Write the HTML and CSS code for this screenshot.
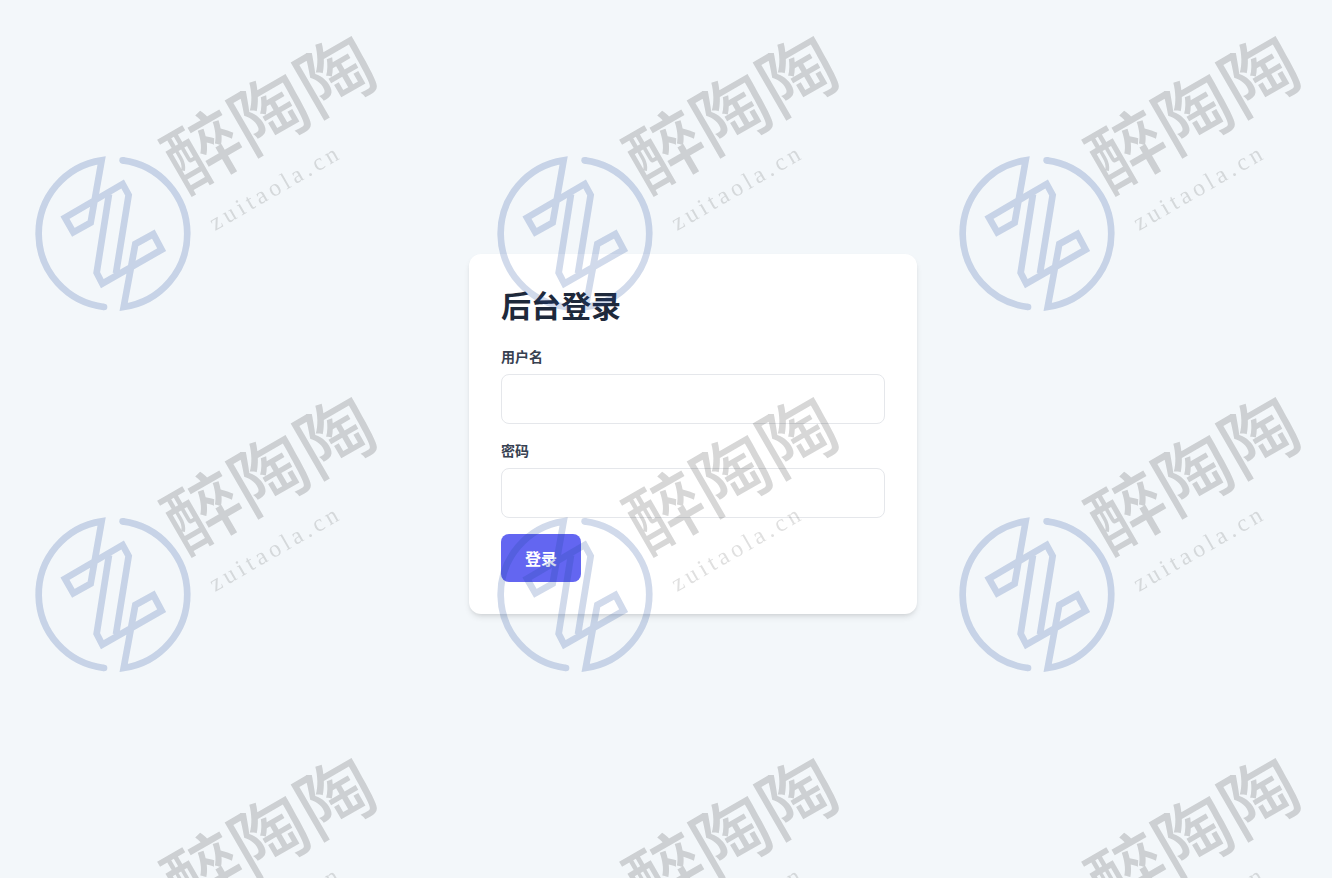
FILE: index.html
```html
<!DOCTYPE html>
<html lang="zh-CN">
<head>
    <meta charset="UTF-8">
    <meta name="viewport" content="width=device-width, initial-scale=1.0">
    <title>后台登录</title>
    <link rel="stylesheet" href="styles.css">
</head>
<body>
    <main class="page">
        <form class="login-card" action="#" method="post">
            <h1>后台登录</h1>
            <div class="input-group">
                <label for="username">用户名</label>
                <input type="text" id="username" name="username" required>
            </div>
            <div class="input-group">
                <label for="password">密码</label>
                <input type="password" id="password" name="password" required>
            </div>
            <button type="submit" class="login-btn">登录</button>
        </form>
    </main>

    <!-- Watermark, filled with tiles by the script below -->
    <div class="watermark" aria-hidden="true"></div>

    <template id="watermark-tile">
        <svg class="tile" viewBox="0 0 462 361">
            <g class="tile-logo" transform="translate(20 140) scale(0.3333)">
                <path d="M308 61A222 222 0 0 1 311 501L346 312L400 282L425 329L247 431L230 398L267 163"/>
                <path d="M252 501A222 222 0 0 1 245 61L212 248L160 277L135 233L308 132L326 165L288 400"/>
                <circle cx="308" cy="61" r="10"/>
                <circle cx="252" cy="501" r="10"/>
            </g>
            <text class="tile-name" transform="translate(185 194) rotate(-30)">醉陶陶</text>
            <text class="tile-site" transform="translate(215 231) rotate(-30)">zuitaola.cn</text>
        </svg>
    </template>

    <script>
        const watermark = document.querySelector('.watermark');
        const tile = document.getElementById('watermark-tile');

        function fillWatermark() {
            const cols = Math.ceil(window.innerWidth / 462);
            const rows = Math.ceil(window.innerHeight / 361);
            watermark.style.setProperty('--cols', cols);
            watermark.replaceChildren();
            for (let i = 0; i < cols * rows; i++) {
                watermark.appendChild(tile.content.cloneNode(true));
            }
        }

        fillWatermark();
        window.addEventListener('resize', fillWatermark);
    </script>
</body>
</html>
```
FILE: styles.css
```css
* {
    margin: 0;
    padding: 0;
    box-sizing: border-box;
}

body {
    font-family: "Noto Sans CJK SC", sans-serif;
    background-color: #f3f7fa;
    color: #1e293b;
}

.page {
    min-height: 100vh;
    padding: 0 0 10px 54px;
    display: flex;
    justify-content: center;
    align-items: center;
}

.login-card {
    width: 100%;
    max-width: 448px;
    padding: 32px;
    background: white;
    border-radius: 12px;
    box-shadow: 0 4px 6px -1px rgba(0,0,0,0.1), 0 2px 4px -2px rgba(0,0,0,0.1);
}

.login-card h1 {
    font-size: 30px;
    line-height: 36px;
    font-weight: bold;
    margin-bottom: 24px;
}

.input-group {
    margin-bottom: 16px;
}

.input-group label {
    display: block;
    font-size: 14px;
    line-height: 20px;
    font-weight: bold;
    color: #374151;
    margin-bottom: 8px;
}

.input-group input {
    display: block;
    width: 100%;
    height: 50px;
    padding: 12px 16px;
    border: 1px solid #e5e7eb;
    border-radius: 8px;
    font-family: inherit;
    font-size: 16px;
    background: white;
}

.input-group input:focus {
    outline: none;
    border-color: #6366f1;
}

.login-btn {
    display: block;
    padding: 12px 24px;
    background-color: #6366f1;
    color: white;
    border: none;
    border-radius: 8px;
    font-family: inherit;
    font-size: 16px;
    line-height: 24px;
    font-weight: bold;
    cursor: pointer;
}

.login-btn:hover {
    background-color: #4f46e5;
}

.watermark {
    position: fixed;
    inset: 0;
    overflow: hidden;
    pointer-events: none;
    display: grid;
    grid-template-columns: repeat(var(--cols), 462px);
    grid-auto-rows: 361px;
    align-content: start;
}

.tile {
    width: 462px;
    height: 361px;
}

.tile-logo {
    opacity: 0.2;
    fill: #1a479a;
}

.tile-logo path {
    fill: none;
    stroke: #1a479a;
    stroke-width: 20;
}

.tile-name {
    font-family: "Noto Sans CJK SC", sans-serif;
    font-size: 76px;
    font-weight: 500;
    fill: #232323;
    opacity: 0.18;
}

.tile-site {
    font-family: "Liberation Serif", serif;
    font-size: 24px;
    letter-spacing: 4px;
    fill: #232323;
    opacity: 0.14;
}
```
